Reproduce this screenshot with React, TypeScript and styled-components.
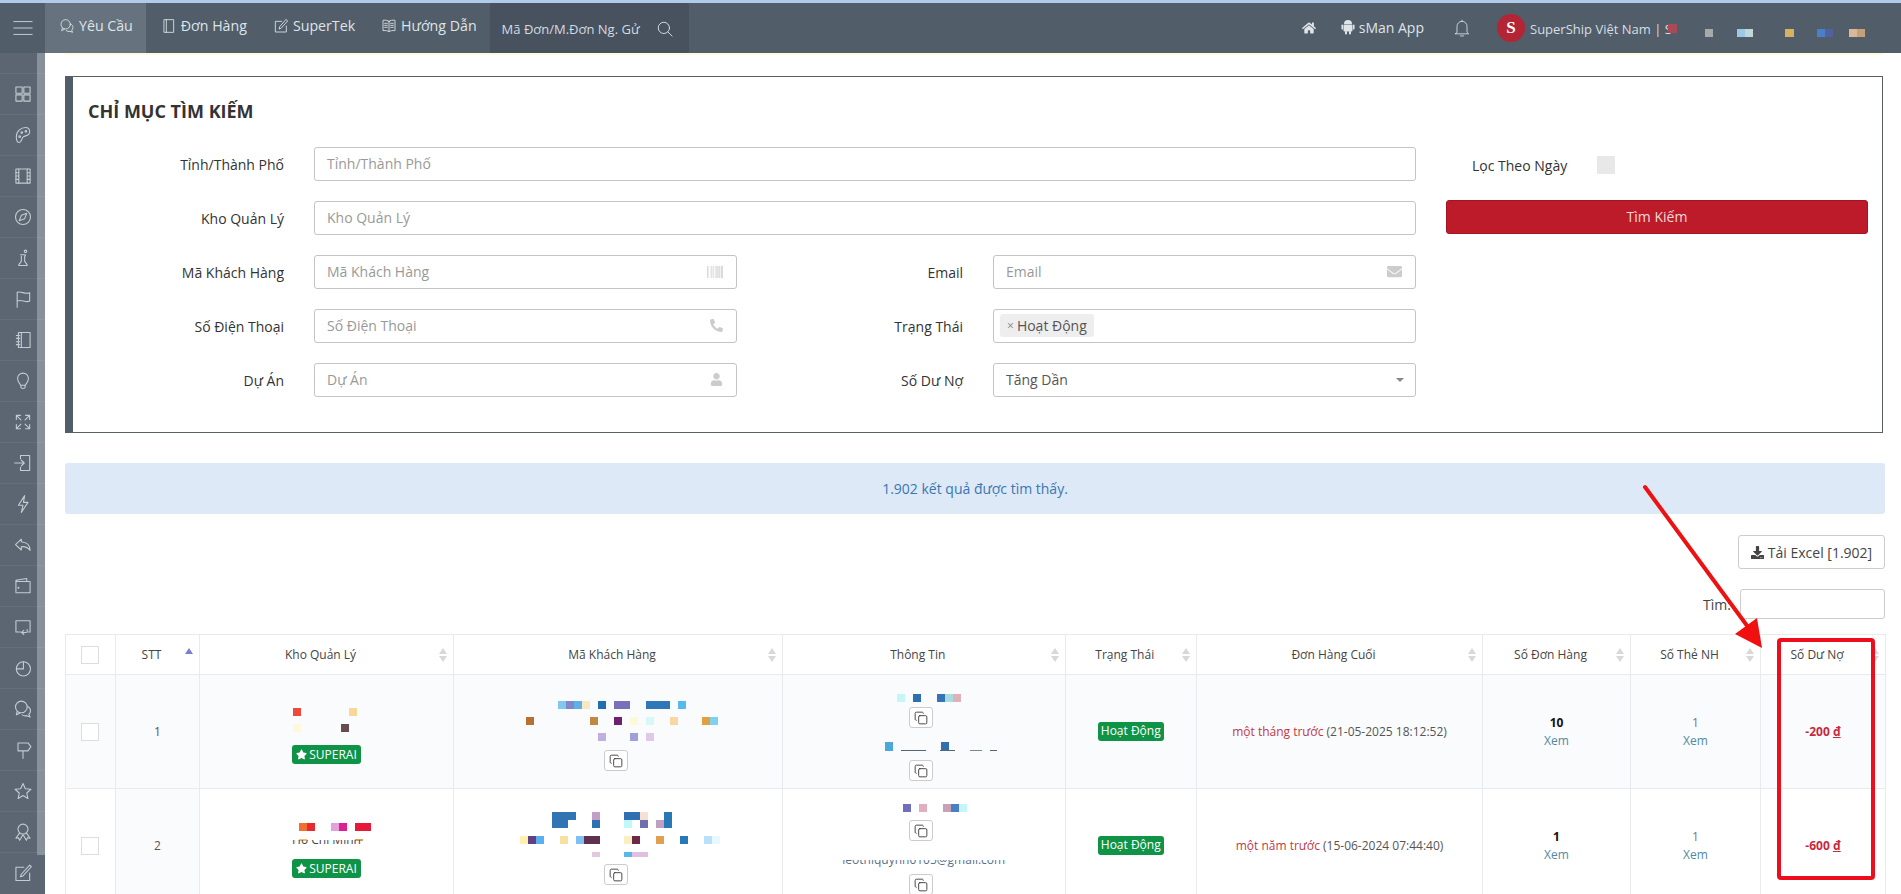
import React from "react";
import styled, { createGlobalStyle } from "styled-components";
import { FaHome, FaBarcode, FaEnvelope, FaPhone, FaUser, FaStar, FaDownload } from "react-icons/fa";
import { Copy } from "lucide-react";

const Global = createGlobalStyle`
  html, body { margin: 0; padding: 0; height: 894px; overflow: hidden; background: #fff; }
  body { font-family: "Open Sans", "Liberation Sans", sans-serif; font-size: 14px; color: #333; }
  * { box-sizing: border-box; }
`;

const Shell = styled.div`height: 894px; overflow: hidden; position: relative; display: flex; flex-direction: column;`;
const TopLine = styled.div`height: 3px; background: #b3cbea; flex: none;`;
const Topbar = styled.header`height: 50px; flex: none; background: #515d69; display: flex; align-items: stretch; color: #dfe4e8;`;
const Burger = styled.div`width: 45px; display: flex; align-items: center; justify-content: center; color: #cfd6dc;`;
const Tab = styled.div<{ $active?: boolean }>`
  display: flex; align-items: center; gap: 4px; padding: 0 ${p => p.$active ? "13px" : "11px"} 5px ${p => p.$active ? "14px" : "15px"};
  background: ${p => p.$active ? "#66737f" : "transparent"}; font-size: 14.2px; white-space: nowrap;
`;
const SearchBox = styled.div`
  width: 199px; margin-left: 2px; background: #47525e; display: flex; align-items: center; padding: 2px 0 0 12px; font-size: 13px; color: #d4dae0;
  span { width: 140px; white-space: nowrap; }
  svg { margin-left: 14px; }
`;
const TopRight = styled.div`margin-left: auto; padding-right: 36px; display: flex; align-items: center;`;
const AppLink = styled.div`display: flex; align-items: center; gap: 4px; margin-left: 25px; font-size: 14px; white-space: nowrap; padding-bottom: 2px;`;
const BellSlot = styled.div`margin-left: 28px; display: flex;`;
const LogoDot = styled.div`
  width: 28px; height: 28px; margin-left: 25px; border-radius: 50%; background: #b32434; color: #fff; display: flex; align-items: center; justify-content: center;
  font: bold 17px "Liberation Serif", serif;
`;
const CompanyWrap = styled.div`position: relative; width: 142px; margin-left: 5px;`;
const Company = styled.div`font-size: 13px; white-space: nowrap; padding-top: 2px; color: #d8dee3;`;
const CompanyMask = styled.i`position: absolute; right: -5px; top: 6px; width: 9px; height: 9px; background: #a84a58;`;
const TopMosaic = styled.svg`margin-left: 23px; flex: none; margin-top: 10px;`;

const Body = styled.div`flex: 1; display: flex; min-height: 0;`;
const Sidebar = styled.aside`width: 45px; flex: none; background: #5b6672; padding-top: 20px; position: relative; color: #c4ccd3;`;
const SideItem = styled.div`height: 41px; border-top: 1px solid #646f7b; display: flex; align-items: center; justify-content: center;`;
const SideScroll = styled.div`position: absolute; top: 0; right: 0; width: 8px; height: 802px; background: rgba(255,255,255,.28);`;

const Main = styled.main`flex: 1; min-width: 0; padding: 0 16px 0 20px;`;
const Strip = styled.div`height: 2px; background: #fdfbdc; margin-right: 2px;`;
const Panel = styled.section`
  margin: 21px 2px 0 0; height: 357px; border: 1px solid #5a5f66; border-left: 8px solid #515d69; display: flex; padding: 0 14px 0 0;
`;
const FormCol = styled.div`width: 1343px; flex: none;`;
const Title = styled.h2`margin: 0; height: 70px; padding: 22px 0 0 15px; font-size: 18px; line-height: 24px; font-weight: 700; color: #333;`;
const Row = styled.div`display: flex; height: 34px; margin-bottom: 20px;`;
const Field = styled.div<{ $w: number }>`display: flex; width: ${p => p.$w}px; flex: none;`;
const Label = styled.label<{ $w: number }>`width: ${p => p.$w}px; flex: none; text-align: right; line-height: 36px; margin-right: 30px; font-size: 14px; color: #333; white-space: nowrap;`;
const InputBox = styled.div`
  flex: 1; height: 34px; border: 1px solid #c4c4c4; border-radius: 3px; display: flex; align-items: center; justify-content: space-between; padding: 0 13px 1px 12px; color: #999; font-size: 14px; background: #fff;
  svg { color: #ccc; flex: none; }
`;
const Value = styled.span`color: #555;`;
const Caret = styled.i`width: 0; height: 0; border-left: 4px solid transparent; border-right: 4px solid transparent; border-top: 4px solid #888; margin-right: -2px;`;
const Tag = styled.span`
  background: #eee; border-radius: 3px; height: 23px; padding: 0 7px 0 7px; margin-left: -6px; display: inline-flex; align-items: center; gap: 3px; color: #555; font-size: 14px;
  small { color: #888; font-size: 12px; }
`;
const SideCol = styled.div`flex: 1; padding: 70px 0 0 30px;`;
const DateRow = styled.div`display: flex; height: 34px; align-items: center; padding-left: 26px; margin-bottom: 19px; font-size: 14px; color: #333; padding-top: 2px;`;
const FakeCheck = styled.i`width: 18px; height: 18px; margin-left: 30px; background: #e8e8e8; display: block;`;
const SearchButton = styled.div`height: 34px; background: #be1b2a; border: 1px solid #a21522; border-radius: 3px; color: #f3d9dc; text-align: center; line-height: 31px; font-size: 14px;`;

const Alert = styled.div`margin-top: 30px; height: 51px; border-radius: 3px; background: #dde9f6; color: #3a77b2; text-align: center; line-height: 51px; font-size: 14px;`;
const ToolRow = styled.div`display: flex; justify-content: flex-end; align-items: center;`;
const ExcelButton = styled.div`
  margin-top: 21px; width: 147px; height: 34px; border: 1px solid #ccc; border-radius: 3px; display: flex; align-items: center; justify-content: center; gap: 4px; font-size: 14px; color: #444;
`;
const FilterRow = styled(ToolRow)`margin-top: 20px; height: 30px; font-size: 14px; color: #444;`;
const FilterInput = styled.div`width: 145px; height: 30px; margin-left: 9px; border: 1px solid #ccc; border-radius: 3px;`;

const Table = styled.table`margin-top: 15px; width: 1820px; table-layout: fixed; border-collapse: collapse; font-size: 12px; color: #555;`;
const Col = styled.col<{ $w: number }>`width: ${p => p.$w}px;`;
const Th = styled.th`
  height: 40px; border: 1px solid #e8eaee; font-weight: 400; text-align: center; padding: 0 22px 0 10px; position: relative; color: #444; white-space: nowrap;
`;
const CheckTh = styled(Th)`padding: 0;`;
const Sort = styled.span<{ $active?: boolean }>`
  position: absolute; right: 6px; top: 13px; display: flex; flex-direction: column; gap: 2px;
  &::before { content: ""; border: 4px solid transparent; border-top: 0; border-bottom: 6px solid ${p => p.$active ? "#7b7fd0" : "#d8d8d8"}; }
  &::after { content: ""; border: 4px solid transparent; border-bottom: 0; border-top: 6px solid ${p => p.$active ? "transparent" : "#d8d8d8"}; }
`;
const Td = styled.td<{ $tint?: boolean }>`
  height: 114px; padding: 0; border: 1px solid #e8eaee; text-align: center; vertical-align: middle; background: ${p => p.$tint ? "#fafbfd" : "#fff"};
`;
const TopTd = styled(Td)`vertical-align: top;`;
const Stack = styled.div<{ $top: number }>`display: flex; flex-direction: column; align-items: center; padding-top: ${p => p.$top}px; overflow: hidden; height: 113px;`;
const Check = styled.i`display: block; width: 18px; height: 18px; margin-left: 15px; background: #fff; border: 1px solid #ddd;`;
const Mos = styled.svg<{ $after: number }>`display: block; flex: none; margin-bottom: ${p => p.$after}px;`;
const CopyButton = styled.div<{ $after?: number }>`
  width: 24px; height: 21px; flex: none; margin: 0 5px ${p => p.$after ?? 0}px 0; border: 1px solid #ccc; border-radius: 3px; display: flex; align-items: center; justify-content: center; color: #333; background: #fff;
`;
const SuperBadge = styled.span`
  width: 69px; height: 19px; flex: none; background: #0f9347; border-radius: 3px; color: #fff; display: flex; align-items: center; justify-content: center; gap: 2px; font-size: 12px; margin-left: 0;
`;
const StatusBadge = styled.span`display: inline-block; width: 66px; height: 19px; line-height: 18px; background: #0f9347; border-radius: 3px; color: #fff; font-size: 12px; white-space: nowrap;`;
const Ago = styled.span`color: #c0394a;`;
const When = styled.span`white-space: nowrap;`;
const Count = styled.div<{ $bold?: boolean }>`line-height: 18px; font-weight: ${p => p.$bold ? 700 : 400}; color: ${p => p.$bold ? "#111" : "#777"};`;
const Xem = styled.div`line-height: 18px; color: #4f8aa6;`;
const Debt = styled.span`
  color: #c9283c; font-weight: 700; font-size: 12px;
  u { text-decoration: underline; }
`;
const Clip = styled.div<{ $w: number; $color: string; $after: number }>`
  height: 8px; width: ${p => p.$w}px; flex: none; overflow: hidden; margin-bottom: ${p => p.$after}px; white-space: nowrap; color: ${p => p.$color}; line-height: 16px;
  span { display: block; margin-top: -8px; }
`;
const Annotation = styled.svg`position: absolute; left: 0; top: 0; pointer-events: none;`;

type R = [number, number, number, number, string];
const Mosaic = ({ w, h, after = 0, cells, left }: { w: number; h: number; after?: number; cells: R[]; left: number }) => (
  <Mos $after={after} width={w} height={h} viewBox={`${left} 0 ${w} ${h}`}>
    {cells.map(([x, y, cw, ch, c], i) => <rect key={i} x={x} y={y} width={cw} height={ch} fill={c} />)}
  </Mos>
);

const Ic = ({ s = 20, w = 1.3, children }: { s?: number; w?: number; children: React.ReactNode }) => (
  <svg width={s} height={s} viewBox="0 0 24 24" fill="none" stroke="currentColor" strokeWidth={w} strokeLinecap="round" strokeLinejoin="round">{children}</svg>
);

const sideIcons: React.ReactNode[] = [
  <><rect x="3.5" y="3.5" width="7.5" height="7.5" /><rect x="13" y="3.5" width="7.5" height="7.5" /><rect x="3.5" y="13" width="7.5" height="7.5" /><rect x="13" y="13" width="7.5" height="7.5" /></>,
  <><path d="M15 3c-5 0-11 4-11 11 0 3 1 7 3.500 7 3 0 2.500-5 5-7 2.500-1.500 7.500-1 7.500-6 0-3-2-5-5-5z" /><circle cx="10.500" cy="9" r="1" /><circle cx="15.500" cy="7.500" r="1" /><circle cx="8" cy="14" r="1" /></>,
  <><rect x="3.500" y="3.500" width="17" height="17" /><path d="M7 3.500v17M17 3.500v17M3.500 8h3.500M3.500 12h3.500M3.500 16h3.500M17 8h3.500M17 12h3.500M17 16h3.500" /></>,
  <><circle cx="12" cy="12" r="9" /><path d="M16.500 7.500l-2.500 6.500-6.500 2.500 2.500-6.500z" /></>,
  <><circle cx="15" cy="4" r="1.500" /><path d="M9 8h5l1 1-1 1v6l3 4v1H7v-1l3-4v-6" /></>,
  <><path d="M5 22V4c5-2 9 3 15 .5v10c-5 2.500-10-2.500-15 0" /></>,
  <><rect x="6.500" y="3" width="14" height="18" /><path d="M10 3v18M4 6.500h4M4 10h4M4 14h4M4 17.500h4" /></>,
  <><path d="M9 17c-.3-2-3.500-3.500-3.500-8a6.500 6.500 0 0 1 13 0c0 4.500-3.200 6-3.500 8z" /><path d="M9.500 17v2.500c0 1 1 1.500 2.500 1.500s2.500-.5 2.500-1.500V17" /></>,
  <><path d="M4 4l5.500 5.500M4 4v5M4 4h5M20 4l-5.500 5.500M20 4v5M20 4h-5M4 20l5.500-5.500M4 20v-5M4 20h5M20 20l-5.500-5.500M20 20v-5M20 20h-5" /></>,
  <><path d="M9 7V3h11v18H9v-4" /><path d="M2 12h11M10 8.500l3.500 3.500-3.500 3.500" /></>,
  <><path d="M14 2L6.500 13.500H12L10 22l8-12h-5.500z" /></>,
  <><path d="M10 5L3 11.500l7 6.500v-4c4-.3 8 .8 10.500 4.500 0-5.500-3.500-10-10.500-10.500z" /></>,
  <><path d="M3.500 8V20h17V6.500H6c-1.500 0-2.500-.5-2.500-1.500M3.500 8l0-3 13-2v3.500" /><circle cx="6.500" cy="14" r=".6" /></>,
  <><path d="M9 18H3.500V4.500h17V18h-2" /><path d="M17 15v2.500a1 1 0 0 1-1 1H10.500M13 16l-2.800 2.500 2.800 2.500" /></>,
  <><circle cx="12.500" cy="13" r="8.500" /><path d="M12.500 13V4.500M12.500 13H4" /></>,
  <><circle cx="10" cy="9.500" r="7" /><path d="M5 15l-1 4 4-2" /><path d="M17.500 9c2 1 3.500 3 3.500 5 0 2-1 3.500-2 4.500l1.500 3-4-1.500c-2 .5-4 0-5.500-1" /></>,
  <><path d="M12 22v-9M6 3.500h12l3.500 4.500-3.500 5H6z" /></>,
  <><path d="M12 3l2.800 6.200 6.700.7-5 4.500 1.400 6.600L12 17.500 6.100 21l1.400-6.600-5-4.500 6.700-.7z" /></>,
  <><circle cx="12" cy="8.500" r="6" /><path d="M8 13l-4.500 6.500 3-.5 1.500 3 3.500-6M16 13l4.500 6.500-3-.5-1.500 3-3.500-6" /></>,
  <><path d="M20 12v9H3.500V5H13" /><path d="M20 2.500l2 2-10 11-3 1 1-3z" /></>,
];

const Comments = <><circle cx="10" cy="9.500" r="7" /><path d="M5 15l-1 4 4-2" /><path d="M17.500 9c2 1 3.500 3 3.500 5s-1 3.500-2 4.500l1.500 3-4-1.500c-2 .5-4 0-5.500-1" /></>;

const kho1: R[] = [[292, 0, 8, 8, "#ec4b3c"], [348, 0, 8, 8, "#f8d898"], [292, 16, 8, 8, "#fff8dc"], [340, 16, 8, 8, "#6b4a50"]];
const kho2: R[] = [[298, 0, 8, 8, "#f07030"], [306, 0, 8, 8, "#e82a30"], [330, 0, 8, 8, "#e2a2e0"], [338, 0, 8, 8, "#e02090"], [354, 0, 16, 8, "#e81838"]];
const kho2b: R[] = [[298, 0, 8, 2, "#e8c070"], [354, 0, 8, 2, "#d8a060"]];
const kh1: R[] = [
  [557, 0, 8, 8, "#80c8f0"], [565, 0, 8, 8, "#8088c8"], [573, 0, 8, 8, "#60b0e8"], [581, 0, 8, 8, "#f8e8c0"], [597, 0, 8, 8, "#2070b0"], [613, 0, 16, 8, "#7870b8"], [645, 0, 24, 8, "#2f78b8"], [677, 0, 8, 8, "#58b8f0"],
  [525, 16, 8, 8, "#b87030"], [589, 16, 8, 8, "#c08840"], [613, 16, 8, 8, "#702070"], [629, 16, 8, 8, "#fff8d8"], [645, 16, 8, 8, "#d8f8f8"], [669, 16, 8, 8, "#f8d8a0"], [701, 16, 8, 8, "#e0a040"], [709, 16, 8, 8, "#80d0f0"],
  [597, 32, 8, 8, "#c0b0e0"], [629, 32, 8, 8, "#a0a0d8"], [645, 32, 8, 8, "#e0c8e8"],
];
const kh2: R[] = [
  [551, 0, 24, 8, "#3074b4"], [551, 8, 16, 8, "#3074b4"], [591, 0, 8, 8, "#c0a0c8"], [591, 8, 8, 8, "#3070b0"], [623, 0, 16, 8, "#3070b0"], [639, 0, 8, 8, "#f8e0d0"], [663, 0, 8, 16, "#2878b8"],
  [623, 8, 8, 8, "#c0f8f8"], [639, 8, 8, 8, "#7070b0"], [655, 8, 8, 8, "#c0a0c0"],
  [519, 24, 8, 8, "#fff0b0"], [527, 24, 8, 8, "#604080"], [535, 24, 8, 8, "#58b0f0"], [559, 24, 8, 8, "#f8e0a0"], [575, 24, 8, 8, "#80c0f0"], [583, 24, 16, 8, "#603050"], [623, 24, 8, 8, "#f8f0c0"], [631, 24, 8, 8, "#702848"], [655, 24, 8, 8, "#e0a050"], [679, 24, 8, 8, "#2878b8"], [703, 24, 8, 8, "#b8e0f8"], [711, 24, 8, 8, "#e8f8ff"],
  [591, 40, 8, 5, "#e0c8e0"], [623, 40, 8, 5, "#58b8e8"], [631, 40, 16, 5, "#e0c0e0"],
];
const info1a: R[] = [[896, 0, 8, 8, "#c5f5f8"], [912, 0, 8, 8, "#2f6fb0"], [936, 0, 8, 8, "#3575b5"], [944, 0, 8, 8, "#a8dde0"], [952, 0, 8, 8, "#e0b0b8"]];
const info1b: R[] = [[884, 0, 8, 9, "#4aa8dc"], [940, 0, 8, 8, "#3070b0"], [900, 8, 25, 1, "#567"], [939, 8, 15, 1, "#567"], [969, 8, 12, 1, "#789"], [989, 8, 7, 1, "#567"]];
const info2: R[] = [[902, 0, 8, 8, "#7070b8"], [918, 0, 8, 8, "#e0b0c0"], [942, 0, 8, 8, "#c8a0b8"], [950, 0, 8, 8, "#4a80c0"], [958, 0, 8, 8, "#c5f5f8"]];
const topMos: R[] = [[10, 0, 8, 8, "#a9a9a9"], [42, 0, 8, 8, "#9cc8e6"], [50, 0, 8, 8, "#c0d8d8"], [90, 0, 9, 8, "#d8b060"], [122, 0, 8, 8, "#4a80c8"], [130, 0, 8, 8, "#5060a0"], [154, 0, 8, 8, "#d8b898"], [162, 0, 8, 8, "#c8a078"]];

const cols = [50, 84, 254, 329, 282.5, 131.5, 286, 148, 130, 125];
const KHO = 199, KH = 453, INFO = 782;
const heads = ["Kho Quản Lý", "Mã Khách Hàng", "Thông Tin", "Trạng Thái", "Đơn Hàng Cuối", "Số Đơn Hàng", "Số Thẻ NH", "Số Dư Nợ"];

const Cp = ({ after }: { after?: number }) => <CopyButton $after={after}><Copy size={14} strokeWidth={1.5} /></CopyButton>;
const Super = () => <SuperBadge><FaStar size={11} />SUPERAI</SuperBadge>;

export default function App() {
  return (
    <Shell>
      <Global />
      <TopLine />
      <Topbar>
        <Burger><Ic s={22} w={1}><path d="M2 5h20M2 12h20M2 19h20" /></Ic></Burger>
        <Tab $active><Ic s={16}>{Comments}</Ic>Yêu Cầu</Tab>
        <Tab><Ic s={16}><rect x="5" y="2.500" width="14" height="19" /><path d="M8 2.500v19" /></Ic>Đơn Hàng</Tab>
        <Tab><Ic s={16}><path d="M20 12v9H3.500V5H13" /><path d="M20 2.500l2 2-10 11-3 1 1-3z" /></Ic>SuperTek</Tab>
        <Tab><Ic s={16}><path d="M12 5c-2-1.500-5-2-9-1.500V19c4-.5 7 0 9 1.500 2-1.500 5-2 9-1.500V3.500C17 3 14 3.500 12 5zM12 5v15.500M5.500 8h4M5.500 11h4M5.500 14h4M14.500 8h4M14.500 11h4M14.500 14h4" /></Ic>Hướng Dẫn</Tab>
        <SearchBox><span>Mã Đơn/M.Đơn Ng. Gử</span><Ic s={18}><circle cx="10.500" cy="10.500" r="7.500" /><path d="M16 16l5.500 5.500" /></Ic></SearchBox>
        <TopRight>
          <FaHome size={14} />
          <AppLink>
            <svg width="14" height="16" viewBox="0 0 14 16" fill="currentColor"><path d="M3 5a4 4 0 0 1 8 0z" /><rect x="2.500" y="5.600" width="9" height="7" rx="1" /><rect x="4" y="12" width="2" height="3.500" rx="1" /><rect x="8" y="12" width="2" height="3.500" rx="1" /><rect x="0.500" y="5.600" width="1.500" height="5" rx=".7" /><rect x="12" y="5.600" width="1.500" height="5" rx=".7" /></svg>
            sMan App
          </AppLink>
          <BellSlot><Ic s={20} w={1}><path d="M6 17V10a6 6 0 0 1 12 0v7l2 2H4zM10 21.500h4M12 2.500v1.500" /></Ic></BellSlot>
          <LogoDot>S</LogoDot>
          <CompanyWrap>
            <Company>SuperShip Việt Nam | S</Company>
            <CompanyMask />
          </CompanyWrap>
          <TopMosaic width={170} height={8}>{topMos.map(([x, y, w, h, c], i) => <rect key={i} x={x} y={y} width={w} height={h} fill={c} />)}</TopMosaic>
        </TopRight>
      </Topbar>
      <Body>
        <Sidebar>
          {sideIcons.map((ic, i) => <SideItem key={i}><Ic>{ic}</Ic></SideItem>)}
          <SideScroll />
        </Sidebar>
        <Main>
          <Strip />
          <Panel>
            <FormCol>
              <Title>CHỈ MỤC TÌM KIẾM</Title>
              <Row><Field $w={1343}><Label $w={211}>Tỉnh/Thành Phố</Label><InputBox>Tỉnh/Thành Phố</InputBox></Field></Row>
              <Row><Field $w={1343}><Label $w={211}>Kho Quản Lý</Label><InputBox>Kho Quản Lý</InputBox></Field></Row>
              <Row>
                <Field $w={664}><Label $w={211}>Mã Khách Hàng</Label><InputBox>Mã Khách Hàng<FaBarcode size={16} /></InputBox></Field>
                <Field $w={679}><Label $w={226}>Email</Label><InputBox>Email<FaEnvelope size={15} /></InputBox></Field>
              </Row>
              <Row>
                <Field $w={664}><Label $w={211}>Số Điện Thoại</Label><InputBox>Số Điện Thoại<FaPhone size={13} transform="scale(-1,1)" /></InputBox></Field>
                <Field $w={679}><Label $w={226}>Trạng Thái</Label><InputBox><Tag><small>×</small>Hoạt Động</Tag></InputBox></Field>
              </Row>
              <Row>
                <Field $w={664}><Label $w={211}>Dự Án</Label><InputBox>Dự Án<FaUser size={13} /></InputBox></Field>
                <Field $w={679}><Label $w={226}>Số Dư Nợ</Label><InputBox><Value>Tăng Dần</Value><Caret /></InputBox></Field>
              </Row>
            </FormCol>
            <SideCol>
              <DateRow>Lọc Theo Ngày<FakeCheck /></DateRow>
              <SearchButton>Tìm Kiếm</SearchButton>
            </SideCol>
          </Panel>
          <Alert>1.902 kết quả được tìm thấy.</Alert>
          <ToolRow><ExcelButton><FaDownload size={13} />Tải Excel [1.902]</ExcelButton></ToolRow>
          <FilterRow>Tìm:<FilterInput /></FilterRow>
          <Table>
            <colgroup>{cols.map((w, i) => <Col key={i} $w={w} />)}</colgroup>
            <thead>
              <tr>
                <CheckTh><Check /></CheckTh>
                <Th>STT<Sort $active /></Th>
                {heads.map(h => <Th key={h}>{h}<Sort /></Th>)}
              </tr>
            </thead>
            <tbody>
              <tr>
                <Td $tint><Check /></Td>
                <Td $tint>1</Td>
                <TopTd $tint><Stack $top={33}><Mosaic left={KHO} w={254} h={24} after={13} cells={kho1} /><Super /></Stack></TopTd>
                <TopTd $tint><Stack $top={26}><Mosaic left={KH} w={329} h={40} after={9} cells={kh1} /><Cp /></Stack></TopTd>
                <TopTd $tint><Stack $top={19}><Mosaic left={INFO} w={282} h={8} after={5} cells={info1a} /><Cp after={14} /><Mosaic left={INFO} w={282} h={9} after={9} cells={info1b} /><Cp /></Stack></TopTd>
                <Td $tint><StatusBadge>Hoạt Động</StatusBadge></Td>
                <Td $tint><When><Ago>một tháng trước</Ago> (21-05-2025 18:12:52)</When></Td>
                <Td $tint><Count $bold>10</Count><Xem>Xem</Xem></Td>
                <Td $tint><Count>1</Count><Xem>Xem</Xem></Td>
                <Td $tint><Debt>-200 <u>đ</u></Debt></Td>
              </tr>
              <tr>
                <Td><Check /></Td>
                <Td $tint>2</Td>
                <TopTd><Stack $top={34}><Mosaic left={KHO} w={254} h={8} after={8} cells={kho2} /><Mosaic left={KHO} w={254} h={2} after={-1} cells={kho2b} /><Clip $w={69} $color="#444" $after={11}><span>Hồ Chí Minh</span></Clip><Super /></Stack></TopTd>
                <TopTd><Stack $top={23}><Mosaic left={KH} w={329} h={45} after={7} cells={kh2} /><Cp /></Stack></TopTd>
                <TopTd><Stack $top={15}><Mosaic left={INFO} w={282} h={8} after={8} cells={info2} /><Cp after={19} /><Clip $w={170} $color="#56708c" $after={6}><span>leothiquynh0105@gmail.com</span></Clip><Cp /></Stack></TopTd>
                <Td><StatusBadge>Hoạt Động</StatusBadge></Td>
                <Td><When><Ago>một năm trước</Ago> (15-06-2024 07:44:40)</When></Td>
                <Td><Count $bold>1</Count><Xem>Xem</Xem></Td>
                <Td><Count>1</Count><Xem>Xem</Xem></Td>
                <Td><Debt>-600 <u>đ</u></Debt></Td>
              </tr>
            </tbody>
          </Table>
        </Main>
      </Body>
      <Annotation width={1901} height={894}>
        <rect x="1779" y="640" width="94" height="238" rx="2" fill="none" stroke="#ee0d1d" strokeWidth="4" />
        <path d="M1645 487L1748 627" stroke="#ee1111" strokeWidth="4" strokeLinecap="round" />
        <path d="M1735 634L1757 618L1762 648Z" fill="#f01010" />
      </Annotation>
    </Shell>
  );
}
